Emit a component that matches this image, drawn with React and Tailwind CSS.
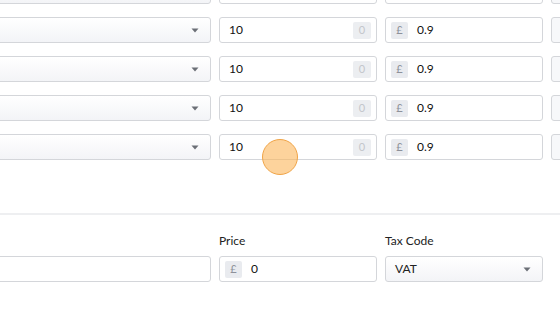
const rows = [
  { qty: "", price: "", hidden: true },
  { qty: "10", price: "0.9" },
  { qty: "10", price: "0.9" },
  { qty: "10", price: "0.9" },
  { qty: "10", price: "0.9" },
];

function Caret() {
  return (
    <svg width="8" height="5" viewBox="0 0 8 5" className="shrink-0">
      <path d="M0.5 0.5 L7.5 0.5 L4 4.5 Z" fill="#6b6f76" />
    </svg>
  );
}

function SelectBox({ value }) {
  return (
    <div className="w-[261px] h-[26px] shrink-0 flex items-center justify-between pl-[10px] pr-[11px] border border-[#d4d6da] rounded-[3px] bg-gradient-to-b from-white to-[#f3f4f7] text-[12px] text-[#222]">
      <span>{value}</span>
      <Caret />
    </div>
  );
}

function QtyBox({ value, hidden }) {
  return (
    <div className="w-[158px] h-[26px] shrink-0 flex items-center justify-between pl-[9px] pr-[5px] border border-[#d4d6da] rounded-[3px] bg-white text-[12px] text-[#111]">
      <span>{value}</span>
      {!hidden && (
        <span className="w-[18px] h-[17px] flex items-center justify-center rounded-[2px] bg-[#eceef1] text-[11px] text-[#c3c6cb]">0</span>
      )}
    </div>
  );
}

function MoneyBox({ value, hidden }) {
  return (
    <div className="w-[158px] h-[26px] shrink-0 flex items-center gap-[9px] pl-[5px] border border-[#d4d6da] rounded-[3px] bg-white text-[12px] text-[#111]">
      {!hidden && (
        <span className="w-[17px] h-[17px] flex items-center justify-center rounded-[2px] bg-[#e9ebef] text-[11px] text-[#8d919a]">£</span>
      )}
      <span>{value}</span>
    </div>
  );
}

export default function App() {
  return (
    <div className="relative w-[560px] h-[315px] overflow-hidden bg-white" style={{ fontFamily: '"Lato", "Noto Sans", sans-serif' }}>
      <div className="-ml-[50px] -mt-[22px] flex flex-col gap-[13px]">
        {rows.map((r, i) => (
          <div key={i} className="flex gap-2">
            <SelectBox value="" />
            <QtyBox value={r.qty} hidden={r.hidden} />
            <MoneyBox value={r.price} hidden={r.hidden} />
            <div className="w-[158px] h-[26px] shrink-0 border border-[#d4d6da] rounded-[3px] bg-[#f7f8fa]" />
          </div>
        ))}
      </div>

      <div className="mt-[53px] border-t-2 border-[#eeeff1]" />

      <div className="-ml-[50px] mt-[19px] flex gap-2 items-end">
        <div className="w-[261px] shrink-0">
          <div className="h-[26px] border border-[#d4d6da] rounded-[3px] bg-white" />
        </div>
        <div className="w-[158px] shrink-0">
          <div className="text-[12px] text-[#222] leading-[14px] mb-[8px]">Price</div>
          <MoneyBox value="0" />
        </div>
        <div className="w-[158px] shrink-0">
          <div className="text-[12px] text-[#222] leading-[14px] mb-[8px]">Tax Code</div>
          <div className="h-[26px] flex items-center justify-between pl-[9px] pr-[11px] border border-[#d4d6da] rounded-[3px] bg-gradient-to-b from-white to-[#f3f4f7] text-[12px] text-[#222]">
            <span>VAT</span>
            <Caret />
          </div>
        </div>
      </div>

      <div className="absolute left-[262px] top-[139px] w-[36px] h-[36px] rounded-full bg-[#fbb55a]/60 border border-[#f0a447]" />
    </div>
  );
}
